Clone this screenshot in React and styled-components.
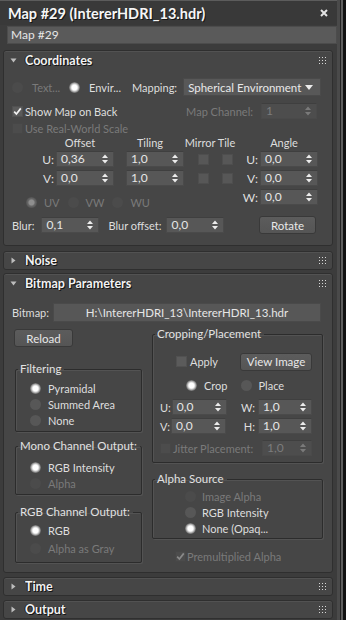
import React from 'react';
import styled, { createGlobalStyle } from 'styled-components';

const GlobalStyle = createGlobalStyle`
  html, body { margin: 0; padding: 0; background: #3b3b3b; }
  body {
    font-family: Lato, "Open Sans", sans-serif;
    font-size: 11px;
    color: #dedede;
  }
  * { box-sizing: border-box; }
`;

const Window = styled.div`
  width: 346px;
  height: 620px;
  display: flex;
  overflow: hidden;
  background: #3c3c3c;
`;

const Main = styled.div`
  width: 337px;
  display: flex;
  flex-direction: column;
`;

const Edge = styled.div`
  width: 9px;
  background: linear-gradient(
    to right,
    #4a4a4a 0 3px,
    #222 3px 4px,
    #5e5e5e 4px 6px,
    #111 6px 9px
  );
`;

const TitleBar = styled.div`
  height: 25px;
  display: flex;
  align-items: center;
  justify-content: space-between;
  padding: 0 9px 0 8px;
  border-top: 1px solid #5c5c5c;
  background: #393939;
  color: #f6f6f6;
  font-weight: 700;
  font-size: 14.5px;
  text-shadow: 1px 1px 0 #151515;
`;

const NameField = styled.div`
  margin: 1px 0 0 7px;
  height: 18px;
  padding-left: 3px;
  line-height: 16px;
  font-size: 12px;
  background: #5a5a5a;
  border: 1px solid #4c4c4c;
  color: #e6e6e6;
`;

const Rollout = styled.section`
  margin: ${(p) => p.$top}px 4px 0 3px;
  border: 1px solid #2f2f2f;
  border-radius: 3px;
  background: #464646;
  box-shadow: inset 0 1px 0 #525252;
`;

const RolloutHead = styled.div`
  height: ${(p) => (p.$open ? 19 : 17)}px;
  display: flex;
  align-items: center;
  padding: 0 6px 0 6px;
  gap: 8px;
  color: #f2f2f2;
  font-weight: 700;
  font-size: 12.5px;
  text-shadow: 1px 1px 0 #151515, -1px 0 0 #202020;
`;

const HeadTitle = styled.span`
  flex: 1;
`;

const Body = styled.div`
  padding: ${(p) => p.$pad};
`;

const Row = styled.div`
  display: flex;
  align-items: center;
  height: ${(p) => p.$h || 16}px;
  margin-top: ${(p) => p.$mt || 0}px;
  padding-left: ${(p) => p.$pl || 0}px;
  padding-right: ${(p) => p.$pr || 0}px;
  gap: ${(p) => p.$gap || 0}px;
  white-space: nowrap;
`;

const Label = styled.span`
  white-space: nowrap;
  color: ${(p) => (p.$disabled ? '#7a7a7a' : '#dedede')};
  margin-left: ${(p) => p.$ml || 0}px;
`;

const Pushed = styled.div`
  margin-left: auto;
  display: flex;
  align-items: center;
  gap: ${(p) => p.$gap || 0}px;
`;

const RadioDot = styled.span`
  width: 11px;
  height: 11px;
  flex-shrink: 0;
  border-radius: 50%;
  background: ${(p) => {
    if (p.$on && p.$disabled)
      return 'radial-gradient(circle, #8e8e8e 0 2.5px, #6a6a6a 3.5px, #525252 5.5px)';
    if (p.$on)
      return 'radial-gradient(circle, #ffffff 0 2.5px, #d4d4d4 3.5px, #626262 5.5px)';
    return p.$disabled ? '#4b4b4b' : '#575757';
  }};
`;

const CheckBox = styled.span`
  width: 11px;
  height: 11px;
  flex-shrink: 0;
  display: flex;
  align-items: center;
  justify-content: center;
  background: ${(p) => (p.$disabled ? '#4c4c4c' : '#5b5b5b')};
  border: 1px solid ${(p) => (p.$disabled ? '#474747' : '#515151')};
`;

const Check = ({ disabled }) => (
  <svg width="9" height="9" viewBox="0 0 9 9">
    <path
      d="M1.2 4.6 L3.4 7 L7.8 1.4"
      fill="none"
      stroke={disabled ? '#8a8a8a' : '#f2f2f2'}
      strokeWidth="1.7"
    />
  </svg>
);

const SpinBox = styled.div`
  width: ${(p) => p.$w}px;
  height: 16px;
  flex-shrink: 0;
  display: flex;
  align-items: center;
  justify-content: space-between;
  padding: 0 5px 0 4px;
  background: ${(p) => (p.$disabled ? '#4d4d4d' : '#575757')};
  border: 1px solid #4a4a4a;
  border-top-color: #3f3f3f;
  color: ${(p) => (p.$disabled ? '#7c7c7c' : '#e6e6e6')};
  font-size: 12px;
  line-height: 14px;
`;

const Arrows = ({ disabled }) => (
  <svg width="6" height="10" viewBox="0 0 6 10">
    <path d="M0 4 L3 0.6 L6 4 Z M0 6 L3 9.4 L6 6 Z" fill={disabled ? '#7a7a7a' : '#ececec'} />
  </svg>
);

const Spinner = ({ value, w = 58, disabled }) => (
  <SpinBox $w={w} $disabled={disabled}>
    <span>{value}</span>
    <Arrows disabled={disabled} />
  </SpinBox>
);

const Dropdown = styled.div`
  width: 138px;
  height: 18px;
  margin-left: 6px;
  display: flex;
  align-items: center;
  justify-content: space-between;
  padding: 0 7px 0 4px;
  background: #585858;
  border: 1px solid #4a4a4a;
  color: #e8e8e8;
  font-size: 11.5px;
  white-space: nowrap;
`;

const Button = styled.div`
  width: ${(p) => p.$w}px;
  height: 18px;
  flex-shrink: 0;
  display: flex;
  align-items: center;
  justify-content: center;
  background: linear-gradient(#5c5c5c, #555555);
  border: 1px solid #393939;
  border-radius: 3px;
  color: #e8e8e8;
  font-size: 11.5px;
`;

const Grip = () => (
  <svg width="7" height="7" viewBox="0 0 7 7">
    {[0, 3, 6].map((y) =>
      [0, 3, 6].map((x) => <rect key={`${x}-${y}`} x={x} y={y} width="1" height="1" fill="#d8d8d8" />)
    )}
  </svg>
);

const Tri = ({ open }) => (
  <svg width="7" height="7" viewBox="0 0 7 7">
    {open ? <path d="M0.5 1.5 L6.5 1.5 L3.5 5.5 Z" fill="#bdbdbd" /> : <path d="M1.5 0.5 L5.5 3.5 L1.5 6.5 Z" fill="#bdbdbd" />}
  </svg>
);

const Header = ({ title, open }) => (
  <RolloutHead $open={open}>
    <Tri open={open} />
    <HeadTitle>{title}</HeadTitle>
    <Grip />
  </RolloutHead>
);

const Radio = ({ on, disabled, children, gap = 7 }) => (
  <Row $gap={gap}>
    <RadioDot $on={on} $disabled={disabled} />
    <Label $disabled={disabled}>{children}</Label>
  </Row>
);

/* coordinates table */
const CoordGrid = styled.div`
  display: grid;
  grid-template-columns: 52px 58px 12px 58px 8px 22px 2px 22px 22px 58px;
  grid-template-rows: 12px 16px 16px 16px;
  row-gap: 3px;
`;

const Slot = styled.div`
  grid-column: ${(p) => p.$col};
  grid-row: ${(p) => p.$row};
  display: flex;
  align-items: center;
  justify-content: ${(p) => p.$justify || 'flex-start'};
  padding-right: ${(p) => p.$pr || 0}px;
`;

const ColHead = styled(Slot)`
  justify-content: center;
  padding-right: 10px;
  white-space: nowrap;
`;

const AxisLabel = styled(Slot)`
  justify-content: flex-end;
  padding-right: 2px;
  font-size: 12px;
`;

const MirrorBox = styled.span`
  width: 11px;
  height: 11px;
  background: #575757;
  border: 1px solid #4e4e4e;
`;

const AxisRadios = styled(Slot)`
  align-self: start;
  margin-top: 5px;
  padding-left: 22px;
  gap: 8px;
`;

/* bitmap parameters */
const PathField = styled.div`
  width: 268px;
  height: 19px;
  margin-left: auto;
  display: flex;
  align-items: center;
  justify-content: center;
  background: #575757;
  border: 1px solid #4a4a4a;
  color: #e6e6e6;
  font-size: 11.5px;
`;

const Columns = styled.div`
  display: grid;
  grid-template-columns: 128px 171px;
  column-gap: 10px;
  margin-top: 7px;
  padding-left: 10px;
  align-items: start;
`;

const Column = styled.div`
  display: flex;
  flex-direction: column;
  margin-top: ${(p) => p.$mt || 0}px;
`;

const Group = styled.fieldset`
  display: block;
  margin: ${(p) => p.$mt || 0}px 0 0 ${(p) => p.$ml || 0}px;
  padding: 0;
  min-width: 0;
  border: 1px solid #2c2c2c;
  border-radius: 2px;
  box-shadow: inset 1px 1px 0 #535353, 1px 1px 0 #535353;
`;

const GroupBody = styled.div`
  display: flex;
  flex-direction: column;
  padding: ${(p) => p.$pad};
  gap: ${(p) => p.$gap || 0}px;
`;

const Legend = styled.legend`
  padding: 0 3px 0 2px;
  margin-left: 2px;
  line-height: 14px;
  font-size: 11.5px;
  white-space: nowrap;
  color: #e2e2e2;
`;

const App = () => {
  return (
    <>
      <GlobalStyle />
      <Window>
        <Main>
          <TitleBar>
            <span>Map #29 (IntererHDRI_13.hdr)</span>
            <svg width="8" height="8" viewBox="0 0 8 8">
              <path d="M1 1 L7 7 M7 1 L1 7" stroke="#e4e4e4" strokeWidth="2" />
            </svg>
          </TitleBar>
          <NameField>Map #29</NameField>

          <Rollout $top={6}>
            <Header title="Coordinates" open />
            <Body $pad="8px 0 10px 0">
              <Row $h={18} $pl={8}>
                <Radio on={false} disabled gap={9}>Text...</Radio>
                <Label $ml={9} as="div">
                  <Radio on gap={9}>Envir...</Radio>
                </Label>
                <Label $ml={11}>Mapping:</Label>
                <Dropdown>
                  <span>Spherical Environment</span>
                  <svg width="8" height="5" viewBox="0 0 8 5">
                    <path d="M0 0 L8 0 L4 5 Z" fill="#ececec" />
                  </svg>
                </Dropdown>
              </Row>
              <Row $mt={7} $pl={8} $pr={15} $gap={2}>
                <CheckBox>
                  <Check />
                </CheckBox>
                <Label>Show Map on Back</Label>
                <Pushed $gap={8}>
                  <Label $disabled>Map Channel:</Label>
                  <Spinner value="1" w={56} disabled />
                </Pushed>
              </Row>
              <Row $mt={1} $pl={8} $gap={2}>
                <CheckBox $disabled />
                <Label $disabled>Use Real-World Scale</Label>
              </Row>

              <CoordGrid>
                <ColHead $col="2" $row="1">Offset</ColHead>
                <ColHead $col="4" $row="1">Tiling</ColHead>
                <ColHead $col="6 / 9" $row="1">Mirror Tile</ColHead>
                <ColHead $col="10" $row="1">Angle</ColHead>

                <AxisLabel $col="1" $row="2">U:</AxisLabel>
                <Slot $col="2" $row="2"><Spinner value="0,36" /></Slot>
                <Slot $col="4" $row="2"><Spinner value="1,0" /></Slot>
                <Slot $col="6" $row="2" $justify="center"><MirrorBox /></Slot>
                <Slot $col="8" $row="2" $justify="center"><MirrorBox /></Slot>
                <AxisLabel $col="9" $row="2">U:</AxisLabel>
                <Slot $col="10" $row="2"><Spinner value="0,0" /></Slot>

                <AxisLabel $col="1" $row="3">V:</AxisLabel>
                <Slot $col="2" $row="3"><Spinner value="0,0" /></Slot>
                <Slot $col="4" $row="3"><Spinner value="1,0" /></Slot>
                <Slot $col="6" $row="3" $justify="center"><MirrorBox /></Slot>
                <Slot $col="8" $row="3" $justify="center"><MirrorBox /></Slot>
                <AxisLabel $col="9" $row="3">V:</AxisLabel>
                <Slot $col="10" $row="3"><Spinner value="0,0" /></Slot>

                <AxisRadios $col="1 / 9" $row="4">
                  <Radio on disabled>UV</Radio>
                  <Radio disabled>VW</Radio>
                  <Radio disabled>WU</Radio>
                </AxisRadios>
                <AxisLabel $col="9" $row="4">W:</AxisLabel>
                <Slot $col="10" $row="4"><Spinner value="0,0" /></Slot>
              </CoordGrid>

              <Row $h={20} $mt={10} $pl={8} $pr={16}>
                <Label>Blur:</Label>
                <Label $ml={7} as="div"><Spinner value="0,1" /></Label>
                <Label $ml={9}>Blur offset:</Label>
                <Label $ml={5} as="div"><Spinner value="0,0" /></Label>
                <Pushed>
                  <Button $w={57}>Rotate</Button>
                </Pushed>
              </Row>
            </Body>
          </Rollout>

          <Rollout $top={5}>
            <Header title="Noise" />
          </Rollout>

          <Rollout $top={3}>
            <Header title="Bitmap Parameters" open />
            <Body $pad="10px 0 8px 0">
              <Row $h={19} $pl={8} $pr={11}>
                <Label>Bitmap:</Label>
                <PathField>H:\IntererHDRI_13\IntererHDRI_13.hdr</PathField>
              </Row>

              <Columns>
                <Column>
                  <Button $w={59}>Reload</Button>
                  <Group $mt={15} $ml={1}>
                    <Legend>Filtering</Legend>
                    <GroupBody $pad="4px 0 3px 14px">
                      <Radio on>Pyramidal</Radio>
                      <Radio>Summed Area</Radio>
                      <Radio>None</Radio>
                    </GroupBody>
                  </Group>
                  <Group $mt={7} $ml={1}>
                    <Legend>Mono Channel Output:</Legend>
                    <GroupBody $pad="6px 0 3px 14px">
                      <Radio on>RGB Intensity</Radio>
                      <Radio disabled>Alpha</Radio>
                    </GroupBody>
                  </Group>
                  <Group $mt={10} $ml={1}>
                    <Legend>RGB Channel Output:</Legend>
                    <GroupBody $pad="3px 0 6px 14px" $gap={2}>
                      <Radio on>RGB</Radio>
                      <Radio disabled>Alpha as Gray</Radio>
                    </GroupBody>
                  </Group>
                </Column>

                <Column $mt={-2}>
                  <Group>
                    <Legend>Cropping/Placement</Legend>
                    <GroupBody $pad="11px 10px 6px 7px">
                      <Row $h={19} $pl={16} $gap={3}>
                        <CheckBox />
                        <Label>Apply</Label>
                        <Pushed>
                          <Button $w={72}>View Image</Button>
                        </Pushed>
                      </Row>
                      <Row $mt={6} $pl={26}>
                        <Radio on>Crop</Radio>
                        <Label $ml={13} as="div"><Radio>Place</Radio></Label>
                      </Row>
                      <Row $mt={6} $gap={1}>
                        <Label>U:</Label>
                        <Spinner value="0,0" w={55} />
                        <Pushed $gap={3}>
                          <Label>W:</Label>
                          <Spinner value="1,0" w={54} />
                        </Pushed>
                      </Row>
                      <Row $mt={3} $gap={1}>
                        <Label>V:</Label>
                        <Spinner value="0,0" w={55} />
                        <Pushed $gap={3}>
                          <Label>H:</Label>
                          <Spinner value="1,0" w={54} />
                        </Pushed>
                      </Row>
                      <Row $mt={6} $gap={2}>
                        <CheckBox $disabled />
                        <Label $disabled>Jitter Placement:</Label>
                        <Pushed>
                          <Spinner value="1,0" w={50} disabled />
                        </Pushed>
                      </Row>
                    </GroupBody>
                  </Group>
                  <Group $mt={9}>
                    <Legend>Alpha Source</Legend>
                    <GroupBody $pad="2px 0 2px 32px">
                      <Radio disabled gap={6}>Image Alpha</Radio>
                      <Radio gap={6}>RGB Intensity</Radio>
                      <Radio on gap={6}>None (Opaq...</Radio>
                    </GroupBody>
                  </Group>
                  <Row $mt={9} $pl={23} $gap={1}>
                    <CheckBox $disabled>
                      <Check disabled />
                    </CheckBox>
                    <Label $disabled>Premultiplied Alpha</Label>
                  </Row>
                </Column>
              </Columns>
            </Body>
          </Rollout>

          <Rollout $top={4}>
            <Header title="Time" />
          </Rollout>
          <Rollout $top={4}>
            <Header title="Output" />
          </Rollout>
        </Main>
        <Edge />
      </Window>
    </>
  );
};

export default App;
